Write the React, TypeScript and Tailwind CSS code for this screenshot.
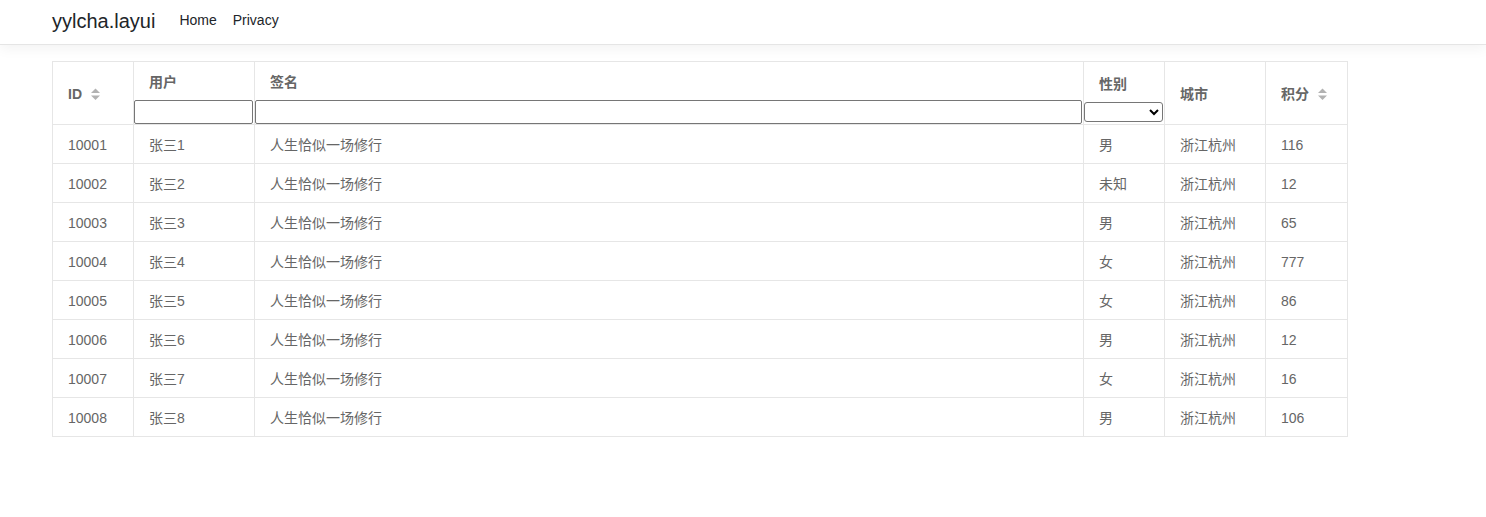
import React from "react";

const rows = [
  ["10001", "张三1", "男", "116"],
  ["10002", "张三2", "未知", "12"],
  ["10003", "张三3", "男", "65"],
  ["10004", "张三4", "女", "777"],
  ["10005", "张三5", "女", "86"],
  ["10006", "张三6", "男", "12"],
  ["10007", "张三7", "女", "16"],
  ["10008", "张三8", "男", "106"],
];

function SortIcon() {
  return (
    <svg width="9" height="13" viewBox="0 0 9 13" className="ml-[9px] inline-block align-middle">
      <polygon points="0,5 4.5,0.5 9,5" fill="#b2b2b2" />
      <polygon points="0,7.5 4.5,12 9,7.5" fill="#b2b2b2" />
    </svg>
  );
}

export default function App() {
  const font = "font-['Liberation_Sans','Noto_Sans_CJK_SC',Arial,sans-serif]";
  const td = "border border-[#e6e6e6] px-[15px] pt-[10px] pb-[8px] leading-[20px] h-[39px] align-middle";
  return (
    <div className={`${font} bg-white min-h-[517px]`}>
      <nav className="h-[45px] border-b border-[#e5e5e5] shadow-[0_0.25rem_0.75rem_rgba(0,0,0,0.05)] bg-white px-[52px] flex items-center">
        <span className="text-[20px] text-[#212529] leading-[24px] -mt-[3px]">yylcha.layui</span>
        <div className="flex ml-[24px] text-[14px] text-[#212529] -mt-[3px]">
          <span>Home</span>
          <span className="ml-[16px]">Privacy</span>
        </div>
      </nav>
      <div className="px-[52px] pt-[16px]">
        <table className="table-fixed border-collapse w-[1295px] text-[14px] text-[#666]">
          <colgroup>
            <col className="w-[81px]" />
            <col className="w-[121px]" />
            <col className="w-[829px]" />
            <col className="w-[81px]" />
            <col className="w-[101px]" />
            <col className="w-[82px]" />
          </colgroup>
          <thead>
            <tr className="h-[63px]">
              <th className="border border-[#e6e6e6] px-[15px] text-left font-bold align-middle">
                <span className="inline-flex items-center pt-[2px]">ID<SortIcon /></span>
              </th>
              <th className="border border-[#e6e6e6] p-0 text-left font-bold align-top">
                <div className="px-[15px] pt-[10px] h-[38px] leading-[20px]">用户</div>
                <input className="block w-[119px] h-[24px] border border-[#767676] rounded-[2px] bg-white" />
              </th>
              <th className="border border-[#e6e6e6] p-0 text-left font-bold align-top">
                <div className="px-[15px] pt-[10px] h-[38px] leading-[20px]">签名</div>
                <input className="block w-[827px] h-[24px] border border-[#767676] rounded-[2px] bg-white" />
              </th>
              <th className="border border-[#e6e6e6] p-0 text-left font-bold align-top">
                <div className="px-[15px] pt-[12px] h-[40px] leading-[20px]">性别</div>
                <select className="block w-[79px] h-[20px] border border-[#767676] rounded-[3px] bg-white text-[12px] text-black">
                  <option></option>
                  <option>男</option>
                  <option>女</option>
                </select>
              </th>
              <th className="border border-[#e6e6e6] px-[15px] text-left font-bold align-middle">
                <span className="inline-block pt-[2px]">城市</span>
              </th>
              <th className="border border-[#e6e6e6] px-[15px] text-left font-bold align-middle">
                <span className="inline-flex items-center pt-[2px]">积分<SortIcon /></span>
              </th>
            </tr>
          </thead>
          <tbody>
            {rows.map((r) => (
              <tr key={r[0]}>
                <td className={td}>{r[0]}</td>
                <td className={td}>{r[1]}</td>
                <td className={td}>人生恰似一场修行</td>
                <td className={td}>{r[2]}</td>
                <td className={td}>浙江杭州</td>
                <td className={td}>{r[3]}</td>
              </tr>
            ))}
          </tbody>
        </table>
      </div>
    </div>
  );
}
